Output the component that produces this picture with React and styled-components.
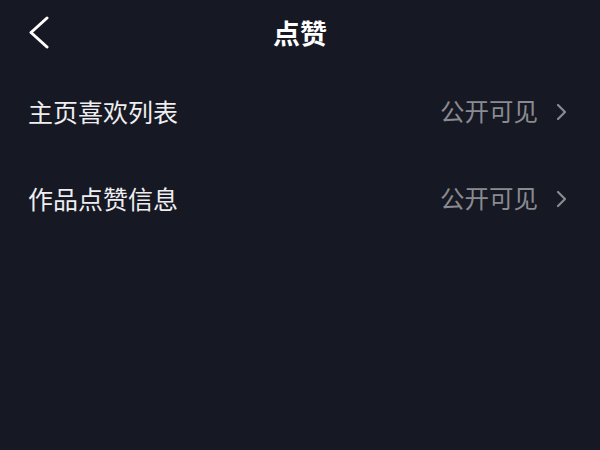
import React from "react";
import styled, { createGlobalStyle } from "styled-components";

const GlobalStyle = createGlobalStyle`
  html, body {
    margin: 0;
    padding: 0;
    background: #161823;
  }
  body {
    font-family: "Noto Sans CJK SC", "Noto Sans", sans-serif;
  }
`;

const Page = styled.div`
  width: 600px;
  height: 450px;
  background: #161823;
  display: flex;
  flex-direction: column;
  overflow: hidden;
`;

const Header = styled.div`
  height: 68px;
  box-sizing: border-box;
  padding-bottom: 4px;
  display: grid;
  grid-template-columns: 80px 1fr 80px;
  align-items: center;
`;

const BackButton = styled.div`
  display: flex;
  align-items: center;
  padding-left: 28px;
  height: 100%;
`;

const Title = styled.h1`
  margin: 0;
  text-align: center;
  color: #ffffff;
  font-size: 27px;
  font-weight: 700;
  line-height: 1;
`;

const Row = styled.div`
  height: 87px;
  display: flex;
  align-items: center;
  justify-content: space-between;
  padding: 0 32px 0 28px;
`;

const Label = styled.span`
  color: #eeeef0;
  font-size: 25px;
  line-height: 1;
`;

const Value = styled.div`
  display: flex;
  align-items: center;
  gap: 17px;
  color: #8a8b91;
  font-size: 24.5px;
  line-height: 1;
`;

const BackIcon = () => (
  <svg width="22" height="34" viewBox="0 0 22 34" fill="none">
    <polyline
      points="19,3 3,17.5 19,32"
      stroke="#ffffff"
      strokeWidth="3"
      strokeLinecap="round"
      strokeLinejoin="round"
    />
  </svg>
);

const Chevron = () => (
  <svg width="13" height="18" viewBox="0 0 13 18" fill="none">
    <polyline
      points="3,2 10,9 3,16"
      stroke="#8a8b91"
      strokeWidth="2.2"
      strokeLinecap="round"
      strokeLinejoin="round"
    />
  </svg>
);

const rows = [
  { label: "主页喜欢列表", value: "公开可见" },
  { label: "作品点赞信息", value: "公开可见" },
];

export default function App() {
  return (
    <>
      <GlobalStyle />
      <Page>
        <Header>
          <BackButton>
            <BackIcon />
          </BackButton>
          <Title>点赞</Title>
          <div />
        </Header>
        {rows.map((row) => (
          <Row key={row.label}>
            <Label>{row.label}</Label>
            <Value>
              {row.value}
              <Chevron />
            </Value>
          </Row>
        ))}
      </Page>
    </>
  );
}
